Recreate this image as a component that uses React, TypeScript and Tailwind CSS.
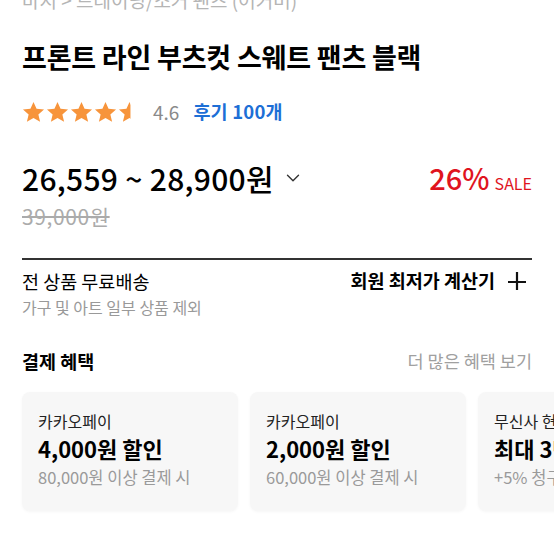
import { ChevronDown } from 'lucide-react'

const Star = ({ half = false }: { half?: boolean }) => (
  <svg width="23" height="22" viewBox="0 0 24 23">
    <defs>
      <clipPath id="halfStar">
        <rect x="0" y="0" width="13" height="23" />
      </clipPath>
    </defs>
    <path
      d="M12 1l3.2 7.2 7.8.7-5.9 5.2 1.8 7.7L12 17.8 5.1 21.8l1.8-7.7L1 8.9l7.8-.7z"
      fill="#f7943b"
      clipPath={half ? 'url(#halfStar)' : undefined}
    />
  </svg>
)

const benefits = [
  { brand: '카카오페이', title: '4,000원 할인', note: '80,000원 이상 결제 시' },
  { brand: '카카오페이', title: '2,000원 할인', note: '60,000원 이상 결제 시' },
  { brand: '무신사 현대카드', title: '최대 3만원 할인', note: '+5% 청구할인' },
]

const App = () => {
  return (
    <div
      className="w-[554px] h-[554px] overflow-hidden bg-white"
      style={{ fontFamily: '"Noto Sans CJK KR", "Noto Sans", sans-serif' }}
    >
      <div className="px-[22px]">
        {/* breadcrumb, scrolled half out of view */}
        <p className="-mt-[13px] text-[19px] leading-[26px] text-[#b5b5b5] whitespace-nowrap">
          바지 &gt; 트레이닝/조거 팬츠 (어커버)
        </p>

        <h1 className="mt-[27px] text-[27px] leading-[34px] font-bold text-black tracking-[-0.2px]">
          프론트 라인 부츠컷 스웨트 팬츠 블랙
        </h1>

        {/* rating */}
        <div className="mt-[25px] flex items-center h-[26px]">
          <div className="flex gap-[1px]">
            <Star />
            <Star />
            <Star />
            <Star />
            <Star half />
          </div>
          <span className="ml-[12px] text-[19px] text-[#8a8a8a]">4.6</span>
          <span className="ml-[14px] text-[18.5px] font-bold text-[#1d6fd6] tracking-[0.2px]">후기 100개</span>
        </div>

        {/* price */}
        <div className="mt-[33px] flex items-center justify-between h-[40px]">
          <div className="flex items-center">
            <span className="text-[30px] font-medium text-black tracking-[0.3px]">26,559 ~ 28,900원</span>
            <ChevronDown className="ml-[8px] w-[22px] h-[22px] text-[#333]" strokeWidth={1.5} />
          </div>
          <div className="flex items-baseline">
            <span className="text-[29px] font-medium text-[#e0141e]">26%</span>
            <span className="ml-[5px] text-[16px] text-[#e0141e]">SALE</span>
          </div>
        </div>
        <p className="mt-[5px] text-[21px] leading-[26px] text-[#ababab] line-through tracking-[0.6px]">39,000원</p>

        <div className="mt-[29px] h-[1.5px] bg-[#333]" />

        {/* shipping */}
        <div className="mt-[8px] flex justify-between items-start">
          <div>
            <p className="text-[18.5px] leading-[26px] text-black">전 상품 무료배송</p>
            <p className="mt-[2px] text-[16px] leading-[22px] text-[#999]">가구 및 아트 일부 상품 제외</p>
          </div>
          <div className="flex items-center h-[26px] mr-[5px]">
            <span className="text-[18.5px] font-bold text-black">회원 최저가 계산기</span>
            <svg className="ml-[12px]" width="20" height="20" viewBox="0 0 20 20">
              <path d="M10 1v18M1 11h18" stroke="#111" strokeWidth="2.2" />
            </svg>
          </div>
        </div>

        {/* payment benefits */}
        <div className="mt-[31px] flex justify-between items-center h-[26px]">
          <h2 className="text-[18.5px] font-bold text-black">결제 혜택</h2>
          <span className="text-[17.5px] text-[#a0a0a0]">더 많은 혜택 보기</span>
        </div>
      </div>

      <div className="mt-[17px] pl-[22px] flex gap-[12px]">
        {benefits.map((b) => (
          <div
            key={b.title}
            className="shrink-0 w-[216px] h-[119px] rounded-[8px] bg-[#f7f7f7] shadow-[0_1px_3px_rgba(0,0,0,0.04)] pl-[16px] pt-[18px] whitespace-nowrap overflow-hidden"
          >
            <p className="text-[16px] leading-[22px] text-[#222]">{b.brand}</p>
            <p className="mt-[2px] text-[22px] leading-[28px] font-bold text-black">{b.title}</p>
            <p className="mt-[3px] text-[16.5px] leading-[24px] text-[#9a9a9a]">{b.note}</p>
          </div>
        ))}
      </div>
    </div>
  )
}

export default App
